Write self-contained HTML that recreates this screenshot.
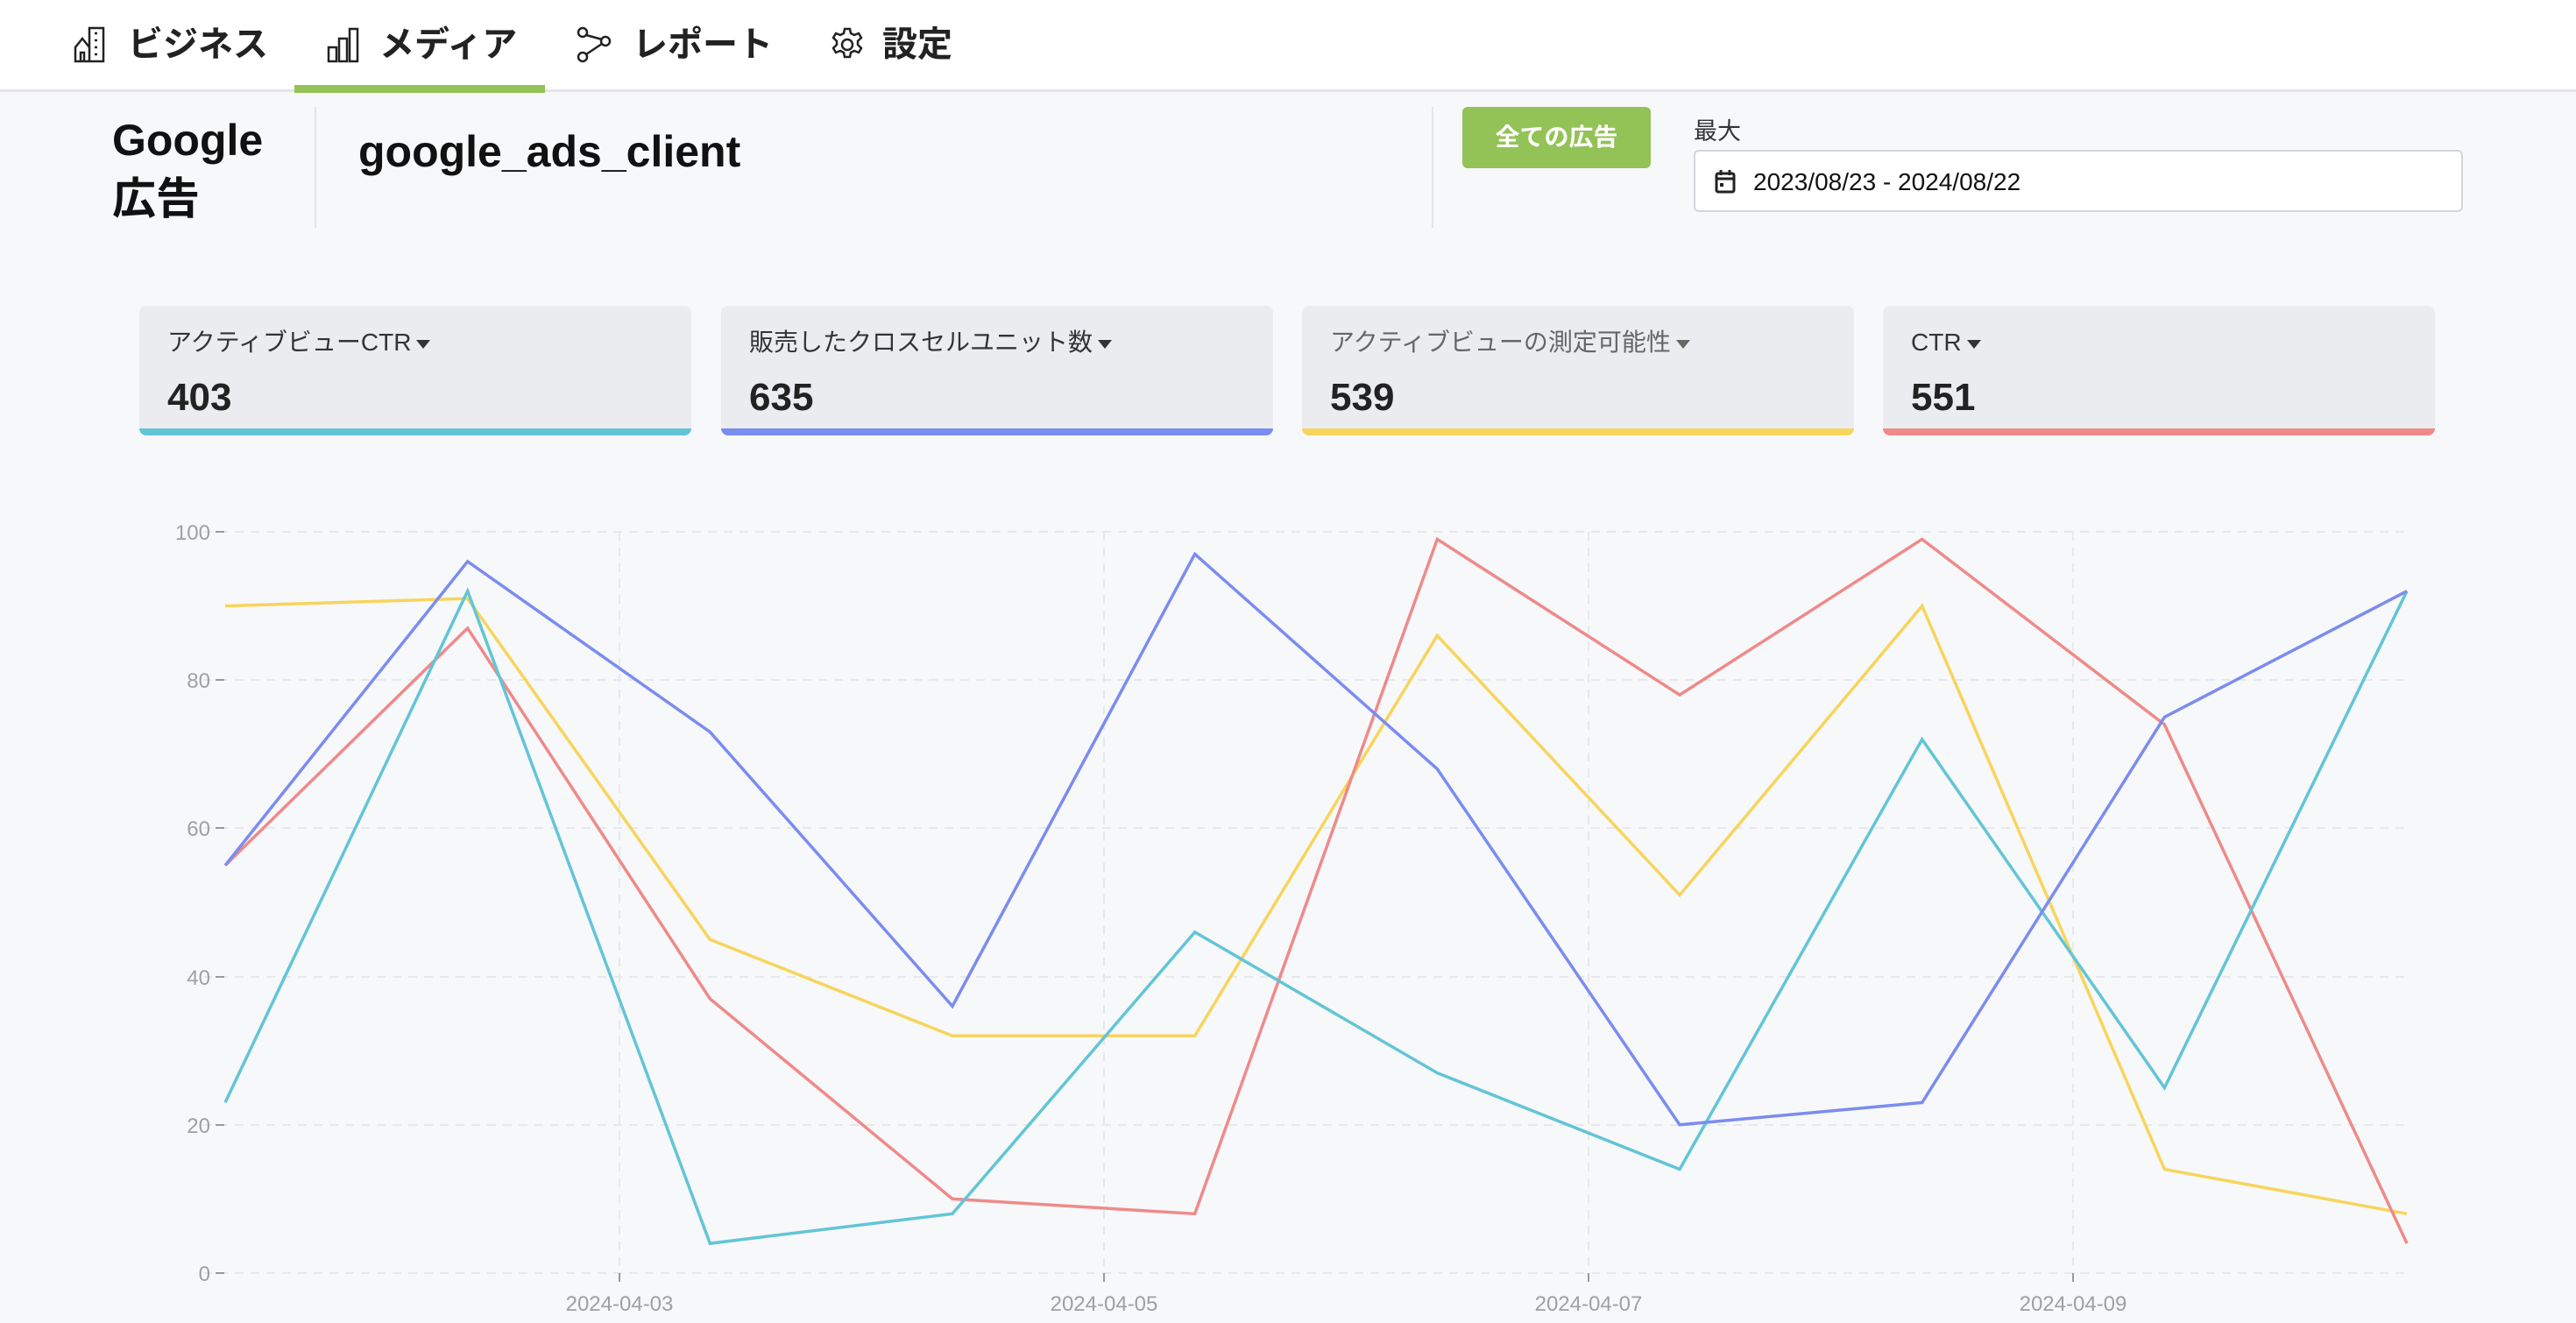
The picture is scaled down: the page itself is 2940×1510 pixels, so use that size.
<!DOCTYPE html>
<html><head><meta charset="utf-8">
<style>
*{margin:0;padding:0;box-sizing:border-box}
body{width:2940px;height:1510px;background:#f7f8fa;font-family:"Liberation Sans","Noto Sans CJK JP",sans-serif;color:#222;position:relative;overflow:hidden}
.nav{position:absolute;left:0;top:0;width:2940px;height:105px;background:#fff;border-bottom:3px solid #e2e4e8}
.ni{position:absolute;top:26px;height:50px;font-size:40px;font-weight:bold;line-height:50px;color:#222}
.ni svg{position:absolute;top:4px}
.ul{position:absolute;left:336px;top:97px;width:286px;height:9px;background:#93c256}
.abs{position:absolute}
.card{position:absolute;top:349px;width:630px;height:148px;background:#ebecef;border-radius:8px;overflow:hidden}
.card .l{position:absolute;left:32px;top:22px;font-size:28px;line-height:40px;height:40px;color:#333;white-space:nowrap}
.card .v{position:absolute;left:32px;top:80px;font-size:44px;font-weight:bold;color:#222}
.card .b{position:absolute;left:0;bottom:0;width:100%;height:8px}
.tri{display:inline-block;width:0;height:0;border-left:8px solid transparent;border-right:8px solid transparent;border-top:10px solid #333;margin-left:6px;vertical-align:middle}
</style></head><body>
<div class="nav">
 <div class="ni" style="left:84px">
  <svg width="40" height="42" viewBox="0 0 40 42" fill="none" stroke="#222" stroke-width="2.5"><path d="M18 40V2h16v38H2V24l8-10 8 10"/><path d="M8 40V30h4v10M24 8h3M24 16h3M24 24h3M24 32h3"/></svg>
  <span style="position:absolute;left:62px;white-space:nowrap">ビジネス</span></div>
 <div class="ni" style="left:373px">
  <svg width="40" height="42" viewBox="0 0 40 42" fill="none" stroke="#222" stroke-width="2.5"><rect x="2" y="24" width="9" height="16"/><rect x="14" y="14" width="9" height="26"/><rect x="26" y="3" width="9" height="37"/></svg>
  <span style="position:absolute;left:60px;white-space:nowrap">メディア</span></div>
 <div class="ni" style="left:658px">
  <svg width="40" height="42" viewBox="0 0 40 42" fill="none" stroke="#222" stroke-width="2.5"><circle cx="7" cy="7" r="5"/><circle cx="33" cy="17" r="5"/><circle cx="7" cy="35" r="5"/><path d="M11 10l18 5M29 20L11 32"/></svg>
  <span style="position:absolute;left:64px;white-space:nowrap">レポート</span></div>
 <div class="ni" style="left:947px">
  <svg width="40" height="42" viewBox="0 0 40 42" fill="none" stroke="#222" stroke-width="2.5"><circle cx="20" cy="21" r="6"/><path d="M17 3h6l1 5 4 2 5-2 3 5-4 4v4l4 4-3 5-5-2-4 2-1 5h-6l-1-5-4-2-5 2-3-5 4-4v-4l-4-4 3-5 5 2 4-2z"/></svg>
  <span style="position:absolute;left:60px;white-space:nowrap">設定</span></div>
 <div class="ul"></div>
</div>

<div class="abs" style="left:128px;top:127px;font-size:50px;font-weight:bold;line-height:67px;color:#111">Google<br>広告</div>
<div class="abs" style="left:359px;top:122px;width:2px;height:138px;background:#e2e4e8"></div>
<div class="abs" style="left:409px;top:144px;font-size:50px;font-weight:bold;color:#111">google_ads_client</div>
<div class="abs" style="left:1634px;top:122px;width:2px;height:138px;background:#e2e4e8"></div>
<div class="abs" style="left:1669px;top:122px;width:215px;height:70px;background:#93c256;border-radius:6px;color:#fff;font-size:28px;font-weight:bold;text-align:center;line-height:70px">全ての広告</div>
<div class="abs" style="left:1933px;top:128px;font-size:27px;color:#333">最大</div>
<div class="abs" style="left:1933px;top:171px;width:878px;height:71px;background:#fff;border:2px solid #d2d5da;border-radius:6px">
 <svg class="abs" style="left:22px;top:20px" width="24" height="28" viewBox="0 0 24 28" fill="none" stroke="#222" stroke-width="3"><rect x="2" y="5" width="20" height="21" rx="2"/><path d="M2 11h20M7 1v6M17 1v6"/><rect x="6" y="16" width="4" height="4" fill="#222" stroke="none"/></svg>
 <div class="abs" style="left:66px;top:19px;font-size:28px;color:#111">2023/08/23 - 2024/08/22</div>
</div>

<div class="card" style="left:159px"><div class="l">アクティブビューCTR<span class="tri"></span></div><div class="v">403</div><div class="b" style="background:#62c5d6"></div></div>
<div class="card" style="left:823px"><div class="l">販売したクロスセルユニット数<span class="tri"></span></div><div class="v">635</div><div class="b" style="background:#7b8cf0"></div></div>
<div class="card" style="left:1486px"><div class="l" style="color:#666">アクティブビューの測定可能性<span class="tri" style="border-top-color:#666"></span></div><div class="v">539</div><div class="b" style="background:#f7d55c"></div></div>
<div class="card" style="left:2149px"><div class="l">CTR<span class="tri"></span></div><div class="v">551</div><div class="b" style="background:#ef8a8a"></div></div>

<svg class="abs" style="left:0;top:0" width="2940" height="1510">
 <g stroke="#e6e8ec" stroke-width="2" stroke-dasharray="10 8">
  <line x1="232" y1="607" x2="2750" y2="607"/><line x1="232" y1="776" x2="2750" y2="776"/><line x1="232" y1="945" x2="2750" y2="945"/><line x1="232" y1="1115" x2="2750" y2="1115"/><line x1="232" y1="1284" x2="2750" y2="1284"/><line x1="232" y1="1453" x2="2750" y2="1453"/>
  <line x1="707" y1="607" x2="707" y2="1453"/><line x1="1260" y1="607" x2="1260" y2="1453"/><line x1="1813" y1="607" x2="1813" y2="1453"/><line x1="2366" y1="607" x2="2366" y2="1453"/>
 </g>
 <g stroke="#999" stroke-width="2"><line x1="246" y1="607" x2="256" y2="607"/><line x1="246" y1="776" x2="256" y2="776"/><line x1="246" y1="945" x2="256" y2="945"/><line x1="246" y1="1115" x2="256" y2="1115"/><line x1="246" y1="1284" x2="256" y2="1284"/><line x1="246" y1="1453" x2="256" y2="1453"/>
 <line x1="707" y1="1453" x2="707" y2="1463"/><line x1="1260" y1="1453" x2="1260" y2="1463"/><line x1="1813" y1="1453" x2="1813" y2="1463"/><line x1="2366" y1="1453" x2="2366" y2="1463"/></g>
 <g font-family="Liberation Sans,sans-serif" font-size="24" fill="#a0a0a0" text-anchor="end">
  <text x="240" y="616">100</text><text x="240" y="785">80</text><text x="240" y="954">60</text><text x="240" y="1124">40</text><text x="240" y="1293">20</text><text x="240" y="1462">0</text>
 </g>
 <g font-family="Liberation Sans,sans-serif" font-size="24" fill="#a0a0a0" text-anchor="middle">
  <text x="707" y="1496">2024-04-03</text><text x="1260" y="1496">2024-04-05</text><text x="1813" y="1496">2024-04-07</text><text x="2366" y="1496">2024-04-09</text>
 </g>
 <g transform="translate(257,1453) scale(276.67,-8.46)" fill="none" stroke-width="3.5" stroke-linejoin="miter">
  <polyline vector-effect="non-scaling-stroke" stroke="#f7d55c" points="0,90 1,91 2,45 3,32 4,32 5,86 6,51 7,90 8,14 9,8"/>
  <polyline vector-effect="non-scaling-stroke" stroke="#ef8a8a" points="0,55 1,87 2,37 3,10 4,8 5,99 6,78 7,99 8,74 9,4"/>
  <polyline vector-effect="non-scaling-stroke" stroke="#62c5d6" points="0,23 1,92 2,4 3,8 4,46 5,27 6,14 7,72 8,25 9,92"/>
  <polyline vector-effect="non-scaling-stroke" stroke="#7b8cf0" points="0,55 1,96 2,73 3,36 4,97 5,68 6,20 7,23 8,75 9,92"/>
 </g>
</svg>
</body></html>
